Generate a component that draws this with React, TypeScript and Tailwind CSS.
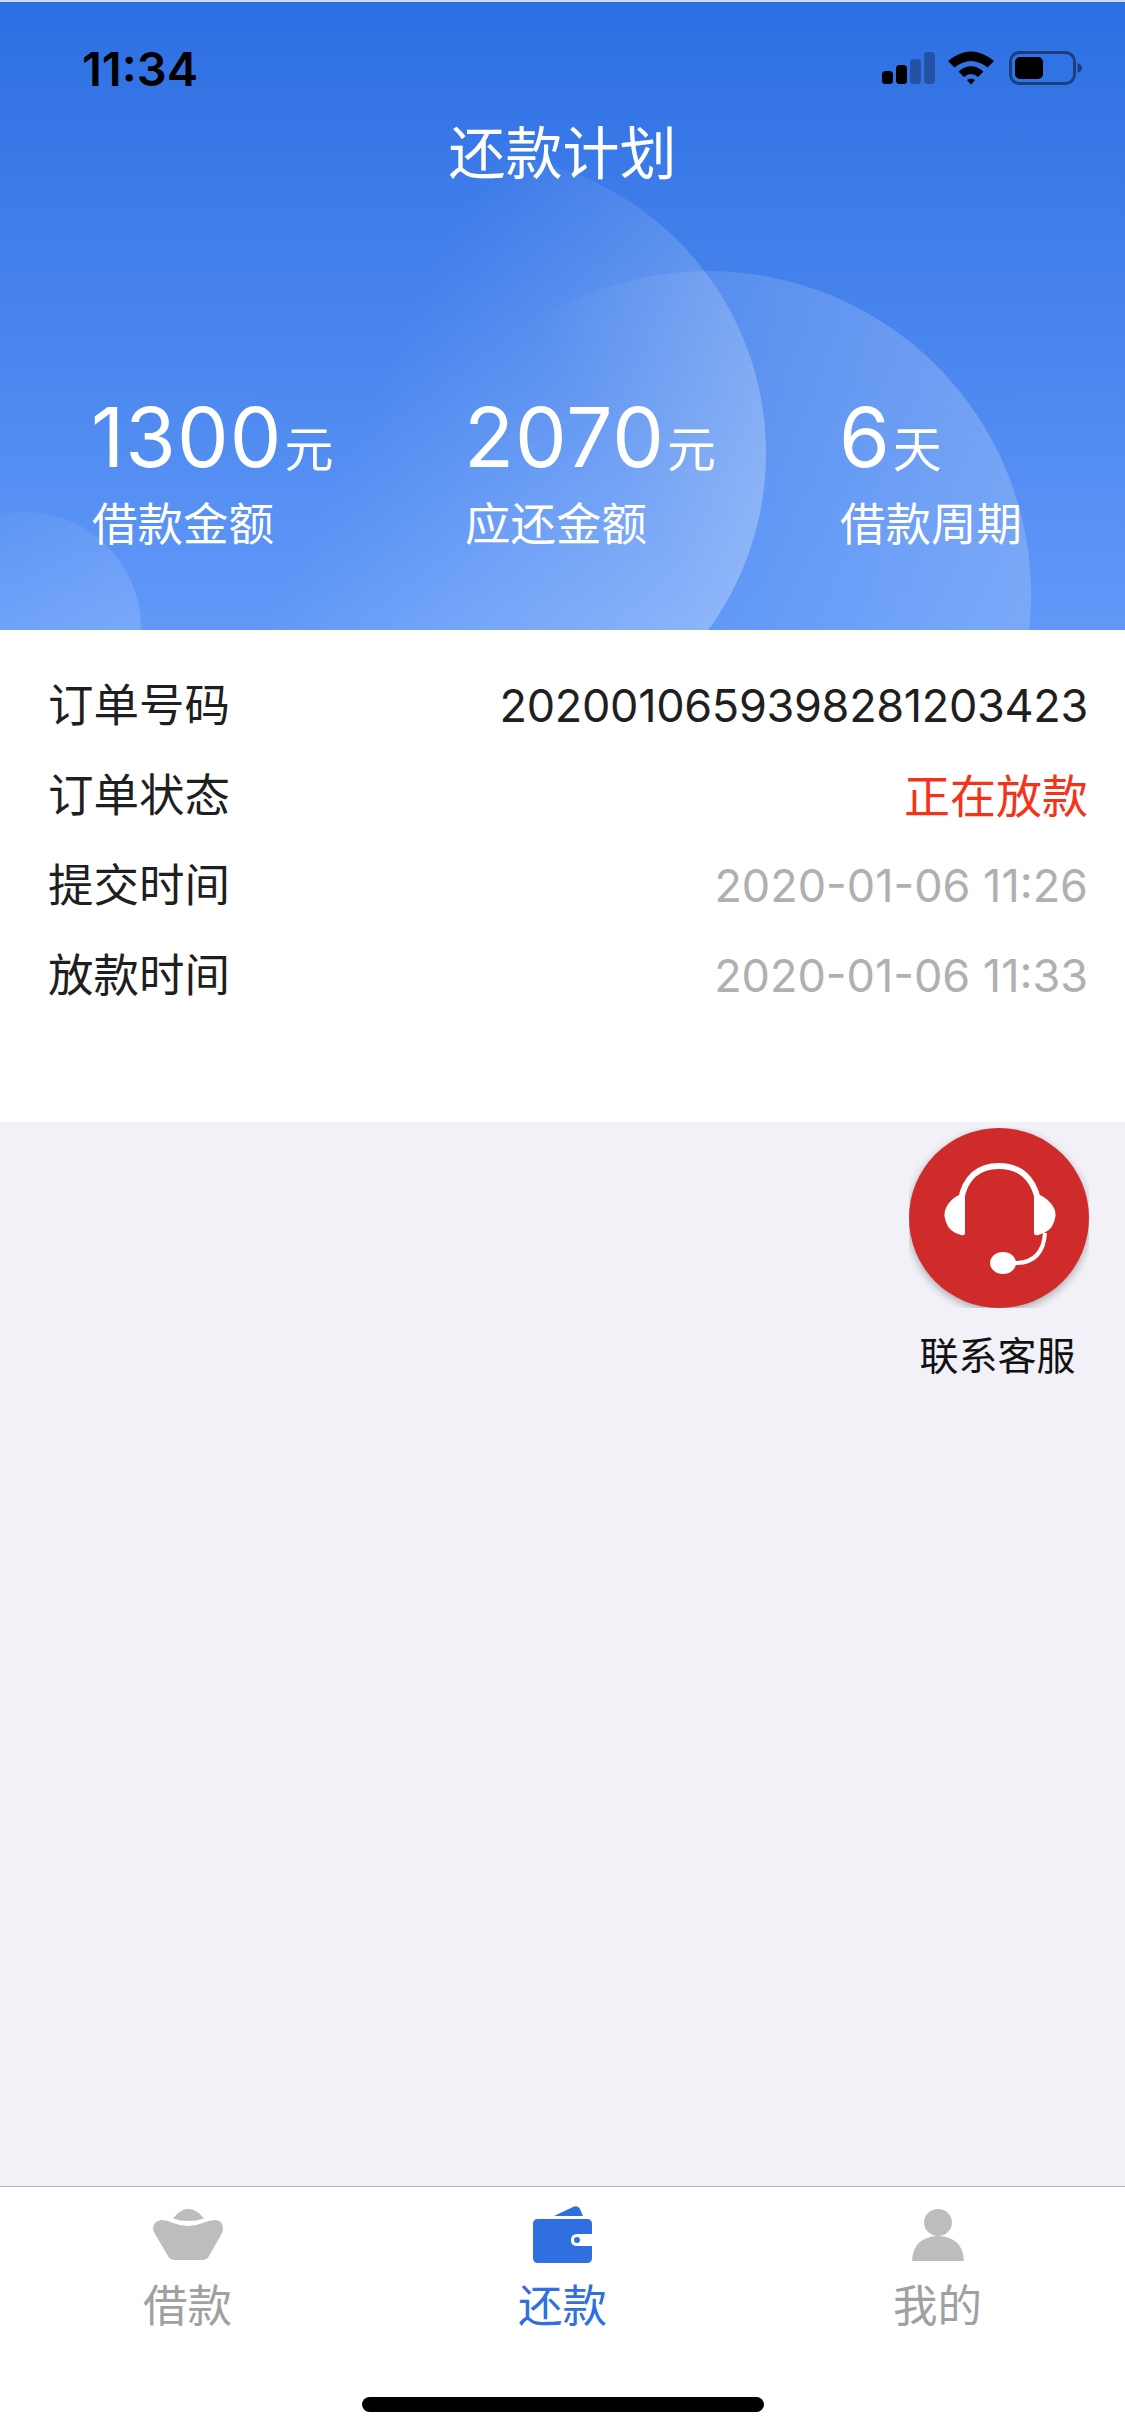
const fontStack = "font-['Inter','Noto_Sans_CJK_SC',sans-serif]";

const stats = [
  { value: "1300", unit: "元", label: "借款金额" },
  { value: "2070", unit: "元", label: "应还金额" },
  { value: "6", unit: "天", label: "借款周期" },
];

const rows = [
  { label: "订单号码", value: "2020010659398281203423", tone: "text-[#1f1f1f] tracking-[-0.3px]" },
  { label: "订单状态", value: "正在放款", tone: "text-[#f5331a] text-[46px]" },
  { label: "提交时间", value: "2020-01-06 11:26", tone: "text-[#b0b0b0]" },
  { label: "放款时间", value: "2020-01-06 11:33", tone: "text-[#b0b0b0]" },
];

function StatusIcons() {
  return (
    <svg width="200" height="34" viewBox="0 0 200 34" className="block">
      <rect x="0" y="20" width="11" height="13" rx="3.5" fill="#000" />
      <rect x="14" y="14" width="11" height="19" rx="3.5" fill="#000" />
      <rect x="28" y="8" width="11" height="25" rx="3.5" fill="#000" opacity="0.28" />
      <rect x="42" y="1" width="11" height="32" rx="3.5" fill="#000" opacity="0.28" />
      <path d="M66 10 Q89 -9 112 10 L105.500 16.500 Q89 3.500 72.500 16.500 Z" fill="#000" />
      <path d="M76.500 20.500 Q89 10 101.500 20.500 L96 26 Q89 20 82 26 Z" fill="#000" />
      <path d="M85 29 Q89 26 93 29 L89 33.500 Z" fill="#000" />
      <rect x="128.500" y="1.500" width="64" height="31" rx="9" fill="none" stroke="#000" strokeOpacity="0.45" strokeWidth="3" />
      <rect x="133" y="6" width="28" height="22" rx="5" fill="#000" />
      <path d="M195.500 12 Q200 14 200 17 Q200 20 195.500 22 Z" fill="#000" opacity="0.45" />
    </svg>
  );
}

function HeadsetIcon() {
  return (
    <svg width="180" height="180" viewBox="0 0 180 180" className="block">
      <path d="M52 72 C56 49 70 38 90 38 C110 38 124 49 129 72" fill="none" stroke="#fff" strokeWidth="6" />
      <path d="M50 67 L56 69 L56 105 Q56 108 52 107 Q40 104 37 94 Q34 86 37 80 Q41 71 50 67 Z" fill="#fff" />
      <path d="M131 67 L125 69 L125 105 Q125 108 129 107 Q142 104 145 94 Q148 86 145 80 Q140 71 131 67 Z" fill="#fff" />
      <path d="M136 105 Q134 134 108 135 L100 135" fill="none" stroke="#fff" strokeWidth="4" />
      <ellipse cx="94" cy="135" rx="13" ry="11" fill="#fff" />
    </svg>
  );
}

function IngotIcon() {
  return (
    <svg width="70" height="51" viewBox="0 0 70 51" className="block">
      <path d="M20 9.500 Q27 0 35 0 Q44 0 51 9.500 Q43 12 35 12 Q27 12 20 9.500 Z" fill="#bdbdbd" />
      <path d="M8 11 Q14 11 20 14 Q28 17 35 17 Q42 17 50 14 Q56 11 63 11 Q70 12 70 20 Q70 23 68 26 L56 47 Q54 51 49 51 L22 51 Q17 51 15 47 L2 25 Q0 22 0 19 Q1 12 8 11 Z" fill="#bdbdbd" />
    </svg>
  );
}

function WalletIcon() {
  return (
    <svg width="59" height="57" viewBox="0 0 59 57" className="block">
      <path d="M21 10 L40 1 Q45 -1 47 3 L50 10 Z" fill="#2f6fe0" />
      <path d="M5 13 L54 13 Q59 13 59 18 L59 28 L44 28 Q38 28 38 34 Q38 40 44 40 L59 40 L59 52 Q59 57 54 57 L5 57 Q0 57 0 52 L0 18 Q0 13 5 13 Z" fill="#2f6fe0" />
      <circle cx="44" cy="34" r="3" fill="#2f6fe0" />
    </svg>
  );
}

function PersonIcon() {
  return (
    <svg width="52" height="52" viewBox="0 0 52 52" className="block">
      <ellipse cx="26" cy="13.500" rx="14" ry="13.500" fill="#bdbdbd" />
      <path d="M0 52 Q1 28 26 27 Q51 28 52 52 Z" fill="#bdbdbd" />
    </svg>
  );
}

const tabs = [
  { label: "借款", icon: <IngotIcon />, tone: "text-[#a0a0a0]" },
  { label: "还款", icon: <WalletIcon />, tone: "text-[#2f6fe0]" },
  { label: "我的", icon: <PersonIcon />, tone: "text-[#a0a0a0]" },
];

export default function App() {
  return (
    <div className={`flex h-[2436px] w-[1125px] flex-col overflow-hidden bg-[#f1f1f7] ${fontStack}`}>
      <header className="relative h-[630px] shrink-0 overflow-hidden border-t-2 border-[#c9dbf8] bg-linear-to-b from-[#2c6ee2] to-[#6199f8] text-white">
        <div className="absolute left-[166px] top-[151px] h-[600px] w-[600px] rounded-full bg-linear-[115deg] from-white/0 from-36% to-white/30 to-92%" />
        <div className="absolute left-[385px] top-[269px] h-[646px] w-[646px] rounded-full bg-linear-[60deg] from-white/0 from-48% to-white/20 to-87%" />
        <div className="absolute left-[-91px] top-[510px] h-[232px] w-[232px] rounded-full bg-linear-to-br from-white/0 to-white/20" />

        <div className="relative mt-[36px] flex h-[60px] items-center justify-between pl-[82px] pr-[43px]">
          <span className="text-[47px] font-semibold leading-none text-black">11:34</span>
          <StatusIcons />
        </div>

        <h1 className="relative mt-[19px] text-center text-[57px] font-normal leading-[74px]">还款计划</h1>

        <div className="relative mt-[197px] grid grid-cols-[373px_375px_1fr] pl-[91px]">
          {stats.map((stat) => (
            <div key={stat.label}>
              <div className="flex h-[100px] items-baseline">
                <span className="text-[82px] leading-[100px] tracking-[1px]">{stat.value}</span>
                <span className="ml-[2px] text-[49px] font-normal leading-[100px]">{stat.unit}</span>
              </div>
              <div className="ml-[1px] mt-[7px] text-[45.5px] leading-[60px]">{stat.label}</div>
            </div>
          ))}
        </div>
      </header>

      <section className="shrink-0 bg-white pb-[101px] pl-[48px] pr-[37px] pt-[31px]">
        {rows.map((row) => (
          <div key={row.label} className="flex h-[90px] items-center justify-between text-[45px]">
            <span className="text-[45.5px] text-[#1f1f1f]">{row.label}</span>
            <span className={row.tone}>{row.value}</span>
          </div>
        ))}
      </section>

      <main className="relative flex-1">
        <div className="absolute right-[36px] top-[6px] flex w-[180px] flex-col items-center">
          <div className="h-[180px] w-[180px] overflow-hidden">
            <div className="rounded-full bg-[#d02b2b] shadow-[0_3px_8px_rgba(0,0,0,0.3)]">
              <HeadsetIcon />
            </div>
          </div>
          <div className="mr-[3px] mt-[18px] whitespace-nowrap text-[39px] leading-[60px] text-[#111]">联系客服</div>
        </div>
      </main>

      <footer className="relative h-[250px] shrink-0 border-t border-[#b4b4b4] bg-white pt-[19px]">
        <div className="grid grid-cols-3">
          {tabs.map((tab) => (
            <div key={tab.label} className="flex flex-col items-center">
              <div className="flex h-[57px] items-center">{tab.icon}</div>
              <div className={`mt-[13px] text-[44.5px] leading-[60px] ${tab.tone}`}>{tab.label}</div>
            </div>
          ))}
        </div>
        <div className="absolute bottom-[24px] left-[362px] h-[15px] w-[402px] rounded-full bg-black" />
      </footer>
    </div>
  );
}
